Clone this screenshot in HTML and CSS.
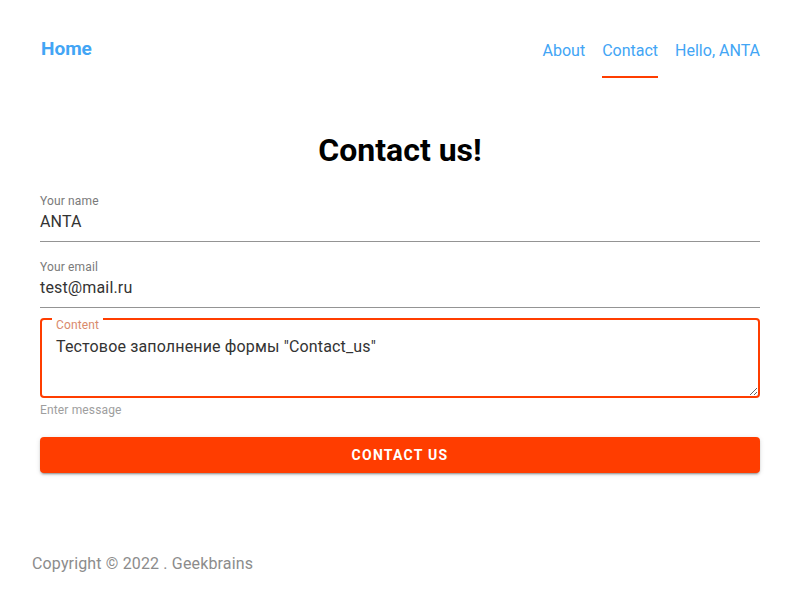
FILE: index.html
```html
<!DOCTYPE html>
<html lang="ru">
<head>
<meta charset="utf-8">
<title>Contact us</title>
<link rel="stylesheet" href="styles.css">
</head>
<body>
<header class="topbar">
  <a class="brand" href="#">Home</a>
  <nav class="tabs">
    <a class="tab" href="#">About</a>
    <a class="tab active" href="#">Contact</a>
    <a class="tab" href="#">Hello, ANTA</a>
  </nav>
</header>
<main class="page">
  <h1 class="title">Contact us!</h1>
  <form class="form">
    <div class="field">
      <label class="field-label">Your name</label>
      <div class="field-value">ANTA</div>
    </div>
    <div class="field second">
      <label class="field-label">Your email</label>
      <div class="field-value">test@mail.ru</div>
    </div>
    <div class="area">
      <label class="area-label">Content</label>
      <textarea class="area-input">Тестовое заполнение формы "Contact_us"</textarea>
    </div>
    <div class="hint">Enter message</div>
    <button type="button" class="submit">Contact us</button>
  </form>
</main>
<footer class="footer">Copyright © 2022 . Geekbrains</footer>
</body>
</html>
```
FILE: styles.css
```css
* { box-sizing: border-box; }
html, body { margin: 0; padding: 0; background: #fff; }
body {
  font-family: Roboto, "Noto Sans", sans-serif;
  color: #212121;
  width: 800px;
  height: 600px;
  overflow: hidden;
  letter-spacing: 0.15px;
}
.topbar {
  display: flex;
  justify-content: space-between;
  align-items: center;
  padding: 22px 40px 0 41px;
}
.brand {
  font-size: 19px;
  font-weight: 700;
  color: #42a5f5;
  text-decoration: none;
  line-height: 24px;
  padding-bottom: 2px;
  letter-spacing: 0;
}
.tabs { display: flex; gap: 17px; }
.tab {
  display: flex;
  align-items: center;
  height: 56px;
  font-size: 16px;
  letter-spacing: 0;
  color: #42a5f5;
  text-decoration: none;
  border-bottom: 2px solid transparent;
  padding-top: 2px;
}
.tab.active { border-bottom-color: #ff3d00; }
.page { padding: 0 40px; }
.title {
  margin: 52px 0 24px;
  text-align: center;
  font-size: 32px;
  line-height: 40px;
  font-weight: 700;
  color: #000;
  letter-spacing: 0;
}
.form { display: flex; flex-direction: column; }
.field {
  border-bottom: 1px solid #949494;
  padding-bottom: 9px;
}
.field.second { margin-top: 18px; }
.field-label {
  display: block;
  font-size: 12px;
  line-height: 14px;
  color: #7a7a7a;
}
.field-value {
  margin-top: 4px;
  font-size: 16px;
  line-height: 20px;
  color: #333;
}
.area {
  position: relative;
  margin-top: 10px;
  border: 2px solid #ff3d00;
  border-radius: 4px;
  height: 80px;
  display: flex;
  flex-direction: column;
}
.area::before {
  content: "";
  position: absolute;
  top: -2px;
  left: 10px;
  width: 51px;
  height: 2px;
  background: #fff;
}
.area-label {
  font-size: 12px;
  line-height: 10px;
  color: #d98a6c;
  padding-left: 14px;
}
.area-input {
  flex: 1;
  margin-top: 5px;
  border: 0;
  outline: 0;
  padding: 0 0 0 14px;
  font-family: Roboto, "Noto Sans", sans-serif;
  font-size: 16px;
  line-height: 24px;
  letter-spacing: 0.15px;
  color: #333;
  background: transparent;
  resize: vertical;
  width: 100%;
}
.hint {
  margin-top: 5px;
  font-size: 12px;
  line-height: 14px;
  color: #9e9e9e;
}
.submit {
  margin-top: 20px;
  height: 36px;
  border: 0;
  border-radius: 4px;
  background: #ff3d00;
  color: #fff;
  font-family: Roboto, "Noto Sans", sans-serif;
  font-size: 14px;
  font-weight: 700;
  letter-spacing: 1.25px;
  text-transform: uppercase;
  box-shadow: 0 3px 1px -2px rgba(0,0,0,.2), 0 2px 2px 0 rgba(0,0,0,.14), 0 1px 5px 0 rgba(0,0,0,.12);
}
.footer {
  margin-top: 79px;
  padding-left: 32px;
  font-size: 16px;
  line-height: 24px;
  color: #8c8c8c;
}
```
